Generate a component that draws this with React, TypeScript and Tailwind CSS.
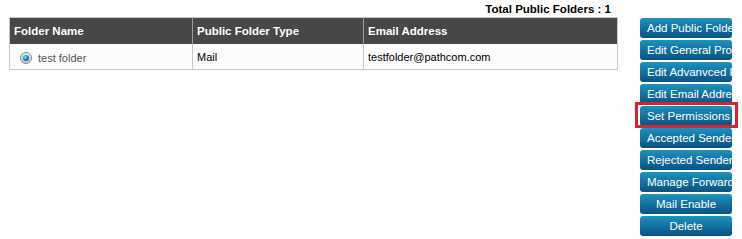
const actions = [
  "Add Public Folder",
  "Edit General Properties",
  "Edit Advanvced Properties",
  "Edit Email Addresses",
  "Set Permissions",
  "Accepted Senders",
  "Rejected Senders",
  "Manage Forwarding",
  "Mail Enable",
  "Delete",
];

function Radio() {
  return (
    <span className="inline-block h-[12px] w-[12px] rounded-full border border-[#8a8a8a] bg-gradient-to-b from-[#ededed] to-[#c4c4c4] p-[2px]">
      <span className="block h-full w-full rounded-full bg-[radial-gradient(circle_at_40%_35%,#8fd8ff_0%,#1d86cc_45%,#0a3766_100%)]" />
    </span>
  );
}

export default function App() {
  return (
    <div
      className="flex min-h-[239px] bg-white pl-[9px] pt-[2px] text-[11px]"
      style={{ fontFamily: '"Liberation Sans", Arial, sans-serif' }}
    >
      <div className="w-[609px]">
        <p className="h-[15px] pr-[7px] text-right text-[11.5px] font-bold leading-[15px] text-black">
          Total Public Folders : 1
        </p>
        <table className="w-full border-collapse border border-[#c8c8c8]">
          <thead>
            <tr className="h-[26px] bg-[#474747] text-left font-bold text-white">
              <th className="w-[183px] border-r border-[#9a9a9a] pl-[4px] pt-[2px] text-[11.5px]">Folder Name</th>
              <th className="w-[171px] border-r border-[#9a9a9a] pl-[4px] pt-[2px] text-[11.5px]">Public Folder Type</th>
              <th className="pl-[4px] pt-[2px] text-[11.5px]">Email Address</th>
            </tr>
          </thead>
          <tbody>
            <tr className="h-[26px] bg-[#fcfcfc]">
              <td className="border-r border-[#c8c8c8] pl-[10px] pt-[3px]">
                <span className="flex items-center gap-[6px] text-[#555]">
                  <Radio />
                  test folder
                </span>
              </td>
              <td className="border-r border-[#c8c8c8] pl-[4px] pt-[2px] text-black">Mail</td>
              <td className="pl-[4px] pt-[2px] text-black">testfolder@pathcom.com</td>
            </tr>
          </tbody>
        </table>
      </div>

      <div className="ml-[22px] mt-[16px] flex flex-col gap-[2px]">
        {actions.map((a) => (
          <div key={a} className="relative">
            <div className="h-[20px] w-[92px] overflow-hidden whitespace-nowrap rounded-[3px] bg-gradient-to-b from-[#1d93bf] to-[#0a5283] px-[7px] text-center text-[11.5px] leading-[20px] text-white">
              {a}
            </div>
            {a === "Set Permissions" && (
              <div className="absolute -bottom-[2px] -left-[5px] -right-[6px] -top-[4px] border-[3px] border-[#e0212b]" />
            )}
          </div>
        ))}
      </div>
    </div>
  );
}
